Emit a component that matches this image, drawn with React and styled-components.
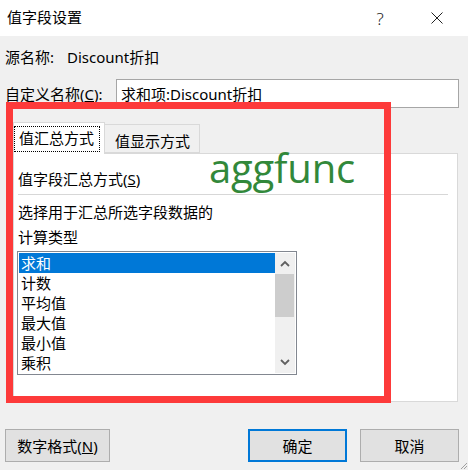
import React from "react";
import styled, { createGlobalStyle } from "styled-components";

const Global = createGlobalStyle`
  html, body { margin: 0; padding: 0; background: #f0f0f0; }
  body {
    font-family: "Noto Sans", "Noto Sans CJK SC", sans-serif;
    font-size: 15px;
    color: #000;
  }
  * { box-sizing: border-box; }
`;

const Window = styled.div`
  position: relative;
  width: 468px;
  height: 470px;
  background: #f0f0f0;
  display: flex;
  flex-direction: column;
  overflow: hidden;
`;

const TitleBar = styled.div`
  height: 36px;
  background: #fff;
  display: flex;
  align-items: center;
  padding-left: 7px;
  padding-right: 8px;
`;

const Title = styled.div`
  flex: 1;
  line-height: 20px;
  margin-top: -2px;
`;

const TitleButton = styled.div`
  width: ${(p) => p.$w}px;
  margin-right: ${(p) => p.$mr || 0}px;
  height: 36px;
  display: flex;
  align-items: center;
  justify-content: center;
  font-family: "Noto Sans", sans-serif;
  font-size: 17px;
  font-weight: 300;
  color: #222;
`;

const Body = styled.div`
  display: flex;
  flex-direction: column;
  padding: 0 9px 0 5px;
`;

const Row = styled.div`
  display: flex;
  align-items: center;
  margin-top: ${(p) => p.$mt}px;
  line-height: 20px;
`;

const Label = styled.span`
  width: ${(p) => p.$w}px;
  flex-shrink: 0;
`;

const TextInput = styled.div`
  flex: 1;
  height: 29px;
  background: #fff;
  border: 1px solid #a6a6a6;
  padding-left: 4px;
  display: flex;
  align-items: center;
`;

const TabStrip = styled.div`
  display: flex;
  align-items: flex-end;
  margin: 14px 0 0 8px;
  height: 31px;
  position: relative;
  z-index: 1;
`;

const Tab = styled.div`
  width: ${(p) => p.$w}px;
  height: ${(p) => (p.$active ? 32 : 29)}px;
  margin-bottom: ${(p) => (p.$active ? -1 : 0)}px;
  background: ${(p) => (p.$active ? "#fff" : "#f0f0f0")};
  border: 1px solid #d9d9d9;
  border-bottom: ${(p) => (p.$active ? "none" : "1px solid #d9d9d9")};
  border-left: ${(p) => (p.$active ? "1px solid #d9d9d9" : "none")};
  padding-top: ${(p) => (p.$active ? 3 : 6)}px;
  padding-left: ${(p) => (p.$active ? 0 : 10)}px;
  line-height: 20px;
`;

const Focus = styled.div`
  width: 86px;
  height: 26px;
  border: 1px dotted #000;
  padding-left: 4px;
  line-height: 23px;
`;

const Panel = styled.div`
  margin-left: 8px;
  width: 445px;
  height: 249px;
  background: #fff;
  border: 1px solid #d9d9d9;
  padding: 0 9px 0 4px;
  display: flex;
  flex-direction: column;
`;

const GroupHeader = styled.div`
  margin-top: 15px;
  line-height: 20px;
`;

const Separator = styled.div`
  margin-top: 5px;
  height: 1px;
  background: #d7d7d7;
`;

const Para = styled.div`
  margin-top: 5px;
  line-height: 25px;
`;

const ListBox = styled.div`
  margin: 1px 0 0 -1px;
  width: 280px;
  height: 124px;
  border: 1px solid #828790;
  padding: 1px;
  display: flex;
  background: #fff;
`;

const Items = styled.div`
  flex: 1;
  display: flex;
  flex-direction: column;
`;

const Item = styled.div`
  height: 20px;
  line-height: 20px;
  padding-left: 2px;
  background: ${(p) => (p.$sel ? "#0078d7" : "transparent")};
  color: ${(p) => (p.$sel ? "#fff" : "#000")};
`;

const Scrollbar = styled.div`
  width: 20px;
  background: #f0f0f0;
  display: flex;
  flex-direction: column;
`;

const ArrowBox = styled.div`
  height: 21px;
  display: flex;
  align-items: center;
  justify-content: center;
`;

const Track = styled.div`
  flex: 1;
  display: flex;
  flex-direction: column;
`;

const Thumb = styled.div`
  height: 43px;
  width: 19px;
  background: #cdcdcd;
`;

const ButtonRow = styled.div`
  display: flex;
  margin-top: 27px;
  gap: 13px;
`;

const Button = styled.div`
  width: ${(p) => p.$w}px;
  height: 33px;
  background: #e1e1e1;
  border: ${(p) => (p.$default ? "2px solid #0078d7" : "1px solid #adadad")};
  display: flex;
  align-items: center;
  justify-content: center;
  margin-left: ${(p) => p.$ml || 0}px;
  line-height: 20px;
`;

const RedBox = styled.div`
  position: absolute;
  left: 6px;
  top: 102px;
  width: 385px;
  height: 301px;
  border: 7px solid #fd3a3a;
  pointer-events: none;
`;

const Annotation = styled.div`
  position: absolute;
  left: 209px;
  top: 148px;
  font-family: "Open Sans", sans-serif;
  font-size: 40px;
  line-height: 40px;
  color: #32883a;
  letter-spacing: -0.2px;
`;

const Grip = styled.svg`
  position: absolute;
  right: 0;
  bottom: 0;
`;

const Chevron = ({ up }) => (
  <svg width="10" height="7" viewBox="0 0 10 7">
    <path
      d={up ? "M1 6 L5 2 L9 6" : "M1 1 L5 5 L9 1"}
      fill="none"
      stroke="#606060"
      strokeWidth="1.8"
    />
  </svg>
);

const items = ["求和", "计数", "平均值", "最大值", "最小值", "乘积"];

export default function App() {
  return (
    <>
      <Global />
      <Window>
        <TitleBar>
          <Title>值字段设置</Title>
          <TitleButton $w={28} $mr={20}>?</TitleButton>
          <TitleButton $w={46}>
            <svg width="12" height="12" viewBox="0 0 12 12">
              <path d="M0.5 0.5 L11.5 11.5 M11.5 0.5 L0.5 11.5" stroke="#222" strokeWidth="1" />
            </svg>
          </TitleButton>
        </TitleBar>
        <Body>
          <Row $mt={11}>
            <Label $w={62}>源名称:</Label>
            <span>Discount折扣</span>
          </Row>
          <Row $mt={12}>
            <Label $w={111}>
              自定义名称(<u>C</u>):
            </Label>
            <TextInput>求和项:Discount折扣</TextInput>
          </Row>
          <TabStrip>
            <Tab $active $w={92}>
              <Focus>值汇总方式</Focus>
            </Tab>
            <Tab $w={95}>值显示方式</Tab>
          </TabStrip>
          <Panel>
            <GroupHeader>
              值字段汇总方式(<u>S</u>)
            </GroupHeader>
            <Separator />
            <Para>
              选择用于汇总所选字段数据的
              <br />
              计算类型
            </Para>
            <ListBox>
              <Items>
                {items.map((t, i) => (
                  <Item key={t} $sel={i === 0}>
                    {t}
                  </Item>
                ))}
              </Items>
              <Scrollbar>
                <ArrowBox>
                  <Chevron up />
                </ArrowBox>
                <Track>
                  <Thumb />
                </Track>
                <ArrowBox>
                  <Chevron />
                </ArrowBox>
              </Scrollbar>
            </ListBox>
          </Panel>
          <ButtonRow>
            <Button $w={105}>
              数字格式(<u>N</u>)
            </Button>
            <Button $w={99} $default $ml={125}>
              确定
            </Button>
            <Button $w={99}>取消</Button>
          </ButtonRow>
        </Body>
        <RedBox />
        <Annotation>aggfunc</Annotation>
        <Grip width="9" height="9" viewBox="0 0 9 9">
          <path d="M8 2 L2 8 M8 5 L5 8" stroke="#a0a0a0" strokeWidth="1" />
        </Grip>
      </Window>
    </>
  );
}
